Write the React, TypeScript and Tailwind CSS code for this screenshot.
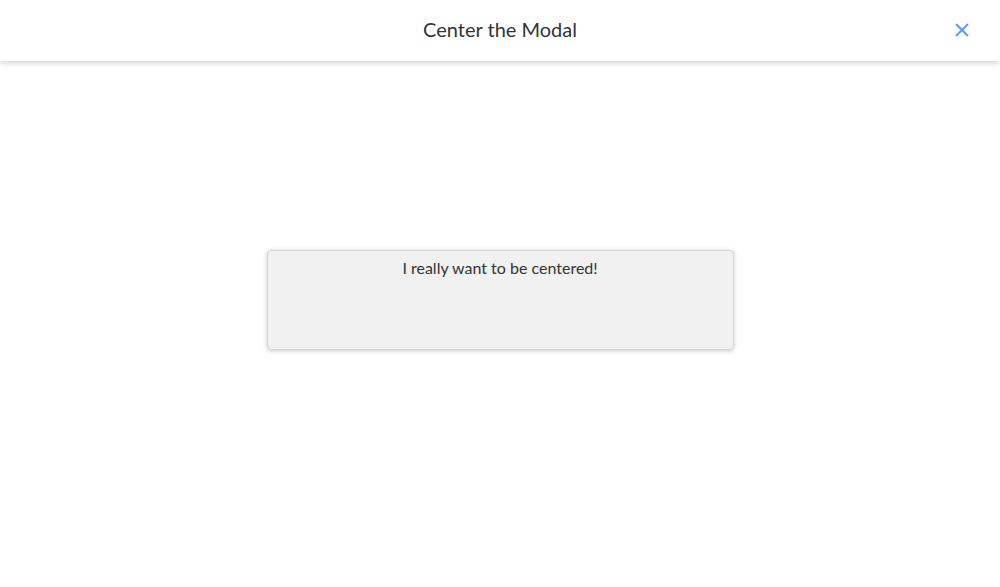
import React from "react";

function App() {
  return (
    <div className="min-h-screen bg-white font-['Lato',sans-serif] text-[#333]">
      <header className="relative h-[61px] flex items-center justify-center pb-[4px] bg-white shadow-[0_2px_6px_rgba(0,0,0,0.18)]">
        <h1 className="text-[20px] leading-none">Center the Modal</h1>
        <button className="absolute right-[30px] top-[22px] w-[16px] h-[16px] flex items-center justify-center text-[#5a9cf2]">
          <svg width="16" height="16" viewBox="0 0 16 16" fill="none">
            <path d="M2 2 L14 14 M14 2 L2 14" stroke="currentColor" strokeWidth="2" strokeLinecap="butt" />
          </svg>
        </button>
      </header>

      <main className="pt-[189px]">
        <div className="mx-auto w-[467px] h-[100px] bg-[#f1f1f1] border border-[#d4d4d4] rounded-[4px] shadow-[0_1px_5px_rgba(0,0,0,0.2)] pt-[5px] text-center">
          <p className="text-[16px] leading-[24px]">I really want to be centered!</p>
        </div>
      </main>
    </div>
  );
}

export default App;
